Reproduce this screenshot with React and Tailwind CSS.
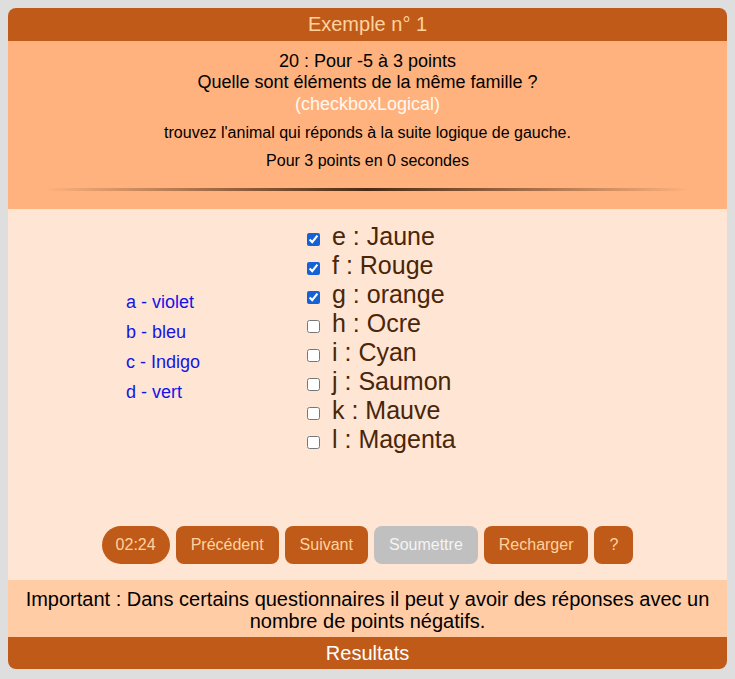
import { useState } from "react";

const left = ["a - violet", "b - bleu", "c - Indigo", "d - vert"];

const initial = [
  { id: "e", label: "e : Jaune", checked: true },
  { id: "f", label: "f : Rouge", checked: true },
  { id: "g", label: "g : orange", checked: true },
  { id: "h", label: "h : Ocre", checked: false },
  { id: "i", label: "i : Cyan", checked: false },
  { id: "j", label: "j : Saumon", checked: false },
  { id: "k", label: "k : Mauve", checked: false },
  { id: "l", label: "l : Magenta", checked: false },
];

export default function App() {
  const [items, setItems] = useState(initial);

  const toggle = (id) =>
    setItems(items.map((it) => (it.id === id ? { ...it, checked: !it.checked } : it)));

  return (
    <div className="min-h-screen bg-[#dedede] p-2 font-['Liberation_Sans',Arial,sans-serif]">
      <div className="rounded-lg overflow-hidden">
        {/* Header */}
        <div className="h-[33px] bg-[#c05a18] text-[#ffd39e] text-[20px] leading-[33px] text-center">
          Exemple n° 1
        </div>

        {/* Question */}
        <div className="bg-[#ffb27d] text-center text-black pt-[10px] pb-[18px]">
          <p className="text-[18px] leading-[21px]">20 : Pour -5 à 3 points</p>
          <p className="text-[18px] leading-[21px]">Quelle sont éléments de la même famille ?</p>
          <p className="text-[18px] leading-[22px] text-[#fff8f0]">(checkboxLogical)</p>
          <p className="mt-2 text-[16px] leading-[20px]">
            trouvez l'animal qui réponds à la suite logique de gauche.
          </p>
          <p className="mt-2 text-[16px] leading-[20px]">Pour 3 points en 0 secondes</p>
          <div className="mt-[17px] mx-[37px] h-[3px] bg-linear-to-r from-transparent via-[#4a2a12] to-transparent"></div>
        </div>

        {/* Answers */}
        <div className="bg-[#ffe5d4] pt-[13px] pb-[16px]">
          <div className="flex">
            <div className="w-[299px] pl-[118px] pt-[65px]">
              {left.map((t) => (
                <div key={t} className="text-[18px] leading-[30px] text-[#1414e6]">
                  {t}
                </div>
              ))}
            </div>
            <div className="flex flex-col">
              {items.map((it) => (
                <label
                  key={it.id}
                  className="flex items-center h-[29px] text-[25px] text-[#4a2608] cursor-pointer"
                >
                  <input
                    type="checkbox"
                    checked={it.checked}
                    onChange={() => toggle(it.id)}
                    className="w-[13px] h-[13px] mt-[5px] mr-[12px] accent-[#1562d6]"
                  />
                  {it.label}
                </label>
              ))}
            </div>
          </div>

          <div className="mt-[72px] flex justify-center gap-[6px] text-[16px]">
            <span className="h-[38px] leading-[38px] px-[14px] rounded-full bg-[#c05a18] text-[#ffd39e]">
              02:24
            </span>
            <button className="h-[38px] px-[15px] rounded-lg bg-[#c05a18] text-[#ffd39e]">Précédent</button>
            <button className="h-[38px] px-[15px] rounded-lg bg-[#c05a18] text-[#ffd39e]">Suivant</button>
            <button className="h-[38px] px-[15px] rounded-lg bg-[#c0c0c0] text-[#f4f4f4]">Soumettre</button>
            <button className="h-[38px] px-[15px] rounded-lg bg-[#c05a18] text-[#ffd39e]">Recharger</button>
            <button className="h-[38px] px-[15px] rounded-lg bg-[#c05a18] text-[#ffd39e]">?</button>
          </div>
        </div>

        {/* Notice */}
        <div className="bg-[#ffcca6] text-black text-[20px] leading-[22px] text-center pt-[8px] pb-[5px] px-2">
          Important : Dans certains questionnaires il peut y avoir des réponses avec un
          <br />
          nombre de points négatifs.
        </div>

        {/* Footer */}
        <div className="h-[32px] bg-[#c05a18] text-white text-[20px] leading-[32px] text-center">
          Resultats
        </div>
      </div>
    </div>
  );
}
